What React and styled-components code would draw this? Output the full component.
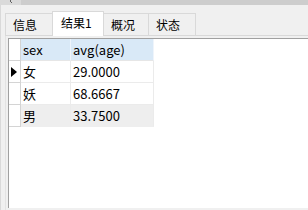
import React from 'react'
import styled, { createGlobalStyle } from 'styled-components'

const GlobalStyle = createGlobalStyle`
html, body {
  margin: 0;
  padding: 0;
}
body {
  width: 308px;
  height: 210px;
  overflow: hidden;
  background: #f0f0f0;
  font-family: "Noto Sans CJK SC", "Noto Sans", sans-serif;
  color: #000;
}
`

const tabs = [
  { label: '信息', width: 48 },
  { label: '结果1', width: 52, active: true },
  { label: '概况', width: 46 },
  { label: '状态', width: 48 },
]

const columns = ['sex', 'avg(age)']

const rows = [
  { sex: '女', avg: '29.0000', current: true },
  { sex: '妖', avg: '68.6667' },
  { sex: '男', avg: '33.7500', shaded: true },
]

const App = () => {
  return (
    <>
      <GlobalStyle />
      <Window>
        <ScrollTrack>
          <ArrowButton>
            <svg width="6" height="5" viewBox="0 0 6 5">
              <polyline points="4,0 2,2 4,4" fill="none" stroke="#606060" strokeWidth="1" />
            </svg>
          </ArrowButton>
        </ScrollTrack>
        <Frame>
          <TabStrip>
            {tabs.map((t) => (
              <Tab key={t.label} active={t.active} w={t.width}>
                {t.label}
              </Tab>
            ))}
          </TabStrip>
          <Body>
            <Panel>
              <Grid>
                <Indicator header />
                {columns.map((c) => (
                  <HeadCell key={c}>{c}</HeadCell>
                ))}
                {rows.map((r) => (
                  <React.Fragment key={r.sex}>
                    <Indicator shaded={r.shaded}>
                      {r.current && (
                        <svg width="6" height="10" viewBox="0 0 6 10">
                          <polygon points="0,0 6,5 0,10" fill="#000" />
                        </svg>
                      )}
                    </Indicator>
                    <Cell shaded={r.shaded}>{r.sex}</Cell>
                    <Cell shaded={r.shaded}>{r.avg}</Cell>
                  </React.Fragment>
                ))}
              </Grid>
            </Panel>
          </Body>
        </Frame>
      </Window>
    </>
  )
}

// window --
const Window = styled.div`
width: 308px;
height: 210px;
display: flex;
flex-direction: column;
background: #f0f0f0;
`

const ScrollTrack = styled.div`
height: 5px;
display: flex;
background: #cdcdcd;
`

const ArrowButton = styled.div`
width: 21px;
height: 5px;
background: #dadada;
display: flex;
justify-content: center;
align-items: flex-start;
svg {
  margin-top: -1px;
}
`

const Frame = styled.div`
flex: 1;
display: flex;
flex-direction: column;
border-left: 1px solid #d9d9d9;
padding-left: 4px;
min-height: 0;
`

// tabs --
const TabStrip = styled.div`
margin-top: 6px;
height: 24px;
display: flex;
align-items: flex-end;
border-bottom: 1px solid #d9d9d9;
`

const Tab = styled.div`
box-sizing: border-box;
width: ${({ w }) => w}px;
height: ${({ active }) => (active ? '25px' : '22px')};
margin-bottom: ${({ active }) => (active ? '-1px' : '0')};
margin-left: -1px;
&:first-child {
  margin-left: 0;
}
padding: ${({ active }) => (active ? '0 0 2px 8px' : '0 0 0 7px')};
display: flex;
align-items: center;
background: ${({ active }) => (active ? '#ffffff' : '#f0f0f0')};
border: 1px solid #d9d9d9;
border-bottom: none;
font-size: 12px;
line-height: 1;
position: relative;
z-index: ${({ active }) => (active ? 1 : 0)};
`

// grid panel --
const Body = styled.div`
flex: 1;
display: flex;
flex-direction: column;
border-left: 1px solid #e3e3e3;
padding: 2px 0 2px 2px;
min-height: 0;
`

const Panel = styled.div`
flex: 1;
background: #ffffff;
border-top: 1px solid #a0a0a0;
border-left: 1px solid #a0a0a0;
`

const Grid = styled.div`
display: grid;
grid-template-columns: 12px 50px 83px;
grid-auto-rows: 22px;
font-size: 13px;
`

const Indicator = styled.div`
box-sizing: border-box;
display: flex;
align-items: center;
justify-content: center;
background: #ffffff;
border-right: 1px solid #d4d4d4;
border-bottom: 1px solid #d4d4d4;
svg {
  margin-left: -1px;
}
`

const HeadCell = styled.div`
box-sizing: border-box;
display: flex;
align-items: center;
padding-left: 2px;
background: #d9e9f7;
border-right: 1px solid #eef4fb;
border-bottom: 1px solid #e6e6e6;
`

const Cell = styled.div`
box-sizing: border-box;
display: flex;
align-items: center;
padding-left: 2px;
background: ${({ shaded }) => (shaded ? '#eeeeee' : '#ffffff')};
border-right: 1px solid #ebebeb;
border-bottom: 1px solid ${({ shaded }) => (shaded ? '#eeeeee' : '#ebebeb')};
`

export default App
